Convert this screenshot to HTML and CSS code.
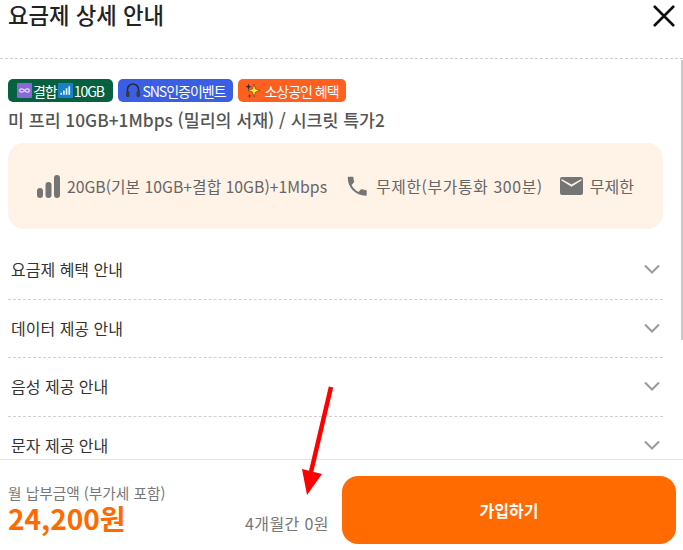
FILE: index.html
```html
<!DOCTYPE html>
<html lang="ko">
<head>
<meta charset="utf-8">
<title>요금제 상세 안내</title>
<link rel="stylesheet" href="styles.css">
</head>
<body>
<div class="modal">
  <header class="head">
    <h1 class="title">요금제 상세 안내</h1>
    <svg class="close" width="24" height="24" viewBox="0 0 24 24"><path d="M2 2L22 22M22 2L2 22" stroke="#111" stroke-width="2.6" fill="none"/></svg>
  </header>
  <main class="content">
    <div class="badges">
      <span class="badge green">
        <svg class="emo" width="15" height="15" viewBox="0 0 14 14"><rect width="14" height="14" rx="1" fill="#8a68d6"/><path d="M7 7C5.500 4.800 2.500 5 2.500 7S5.500 9.200 7 7 11.500 5 11.500 7 8.500 9.200 7 7Z" stroke="#e8e0fa" stroke-width="1.100" fill="none"/></svg>결합<svg class="emo" width="15" height="15" viewBox="0 0 14 14"><rect width="14" height="14" rx="1" fill="#1d7fc9"/><path d="M3 11V9M5.500 11V7M8 11V5M10.500 11V3" stroke="#dff" stroke-width="1.500"/></svg>10GB
      </span>
      <span class="badge blue">
        <svg class="emo" width="16" height="17" viewBox="0 0 16 17"><path d="M2.500 10V7.500a5.500 5.500 0 0 1 11 0V10" stroke="#2b2b33" stroke-width="1.600" fill="none"/><rect x="1" y="9" width="3.500" height="6" rx="1.500" fill="#3a3a42"/><rect x="11.500" y="9" width="3.500" height="6" rx="1.500" fill="#3a3a42"/></svg>SNS인증이벤트
      </span>
      <span class="badge orange">
        <svg class="emo" width="16" height="17" viewBox="0 0 16 17"><path d="M9 2L10.500 7 15 8.500 10.500 10 9 15 7.500 10 3 8.500 7.500 7Z" fill="#ffe838" stroke="#5a3a20" stroke-width=".6"/><path d="M3.500 1.500L4.300 4 6.500 4.700 4.300 5.500 3.500 8 2.700 5.500.5 4.700 2.700 4Z" fill="#2d2a4a"/><path d="M4.500 11.500L5 13.500 6.800 14 5 14.600 4.500 16.500 4 14.600 2.200 14 4 13.500Z" fill="#4a3a6a"/></svg>소상공인 혜택
      </span>
    </div>
    <h2 class="plan">미 프리 10GB+1Mbps (밀리의 서재) / 시크릿 특가2</h2>
    <section class="specs">
      <div class="spec">
        <svg width="23" height="23" viewBox="0 0 23 23"><rect x="0" y="13" width="6" height="10" rx="3" fill="#757575"/><rect x="8.500" y="7" width="6" height="16" rx="3" fill="#757575"/><rect x="17" y="0" width="6" height="23" rx="3" fill="#757575"/></svg>
        <span>20GB(기본 10GB+결합 10GB)+1Mbps</span>
      </div>
      <div class="spec">
        <svg width="23" height="23" viewBox="0 0 24 24"><path d="M6.620 10.790c1.440 2.830 3.760 5.140 6.590 6.590l2.200-2.200c.27-.27.67-.36 1.020-.24 1.120.37 2.330.57 3.570.57.550 0 1 .45 1 1V20c0 .55-.45 1-1 1C10.610 21 3 13.390 3 4c0-.55.450-1 1-1h3.500c.55 0 1 .45 1 1 0 1.250.2 2.450.57 3.570.11.350.03.740-.25 1.020l-2.200 2.200z" transform="translate(-1.500 -1.500) scale(1.100)" fill="#757575"/></svg>
        <span class="wide">무제한(부가통화 300분)</span>
      </div>
      <div class="spec mail">
        <svg width="23" height="18" viewBox="0 0 23 18"><path d="M2 0h19a2 2 0 0 1 2 2v14a2 2 0 0 1-2 2H2a2 2 0 0 1-2-2V2a2 2 0 0 1 2-2zM1.500 3.500l10 6.300 10-6.300V2l-10 5.500L1.500 2z" fill="#757575"/></svg>
        <span>무제한</span>
      </div>
    </section>
    <ul class="rows">
      <li class="row"><span>요금제 혜택 안내</span><svg class="chev" width="16" height="10" viewBox="0 0 16 10"><path d="M1 1.500L8 8.500 15 1.500" stroke="#9a9a9a" stroke-width="2" fill="none"/></svg></li>
      <li class="row"><span>데이터 제공 안내</span><svg class="chev" width="16" height="10" viewBox="0 0 16 10"><path d="M1 1.500L8 8.500 15 1.500" stroke="#9a9a9a" stroke-width="2" fill="none"/></svg></li>
      <li class="row"><span>음성 제공 안내</span><svg class="chev" width="16" height="10" viewBox="0 0 16 10"><path d="M1 1.500L8 8.500 15 1.500" stroke="#9a9a9a" stroke-width="2" fill="none"/></svg></li>
      <li class="row"><span>문자 제공 안내</span><svg class="chev" width="16" height="10" viewBox="0 0 16 10"><path d="M1 1.500L8 8.500 15 1.500" stroke="#9a9a9a" stroke-width="2" fill="none"/></svg></li>
    </ul>
  </main>
  <footer class="foot">
    <div class="price">
      <div class="price-label">월 납부금액 (부가세 포함)</div>
      <div class="price-value">24,200원</div>
    </div>
    <div class="promo">4개월간 0원</div>
    <button class="join">가입하기</button>
  </footer>
  <div class="thumb"></div>
  <svg class="arrow" width="683" height="550" viewBox="0 0 683 550"><path d="M331 387L311 472" stroke="#f00" stroke-width="4.500" fill="none"/><path d="M302 469L322 474 307 495Z" fill="#f00"/></svg>
</div>
</body>
</html>
```
FILE: styles.css
```css
* { box-sizing: border-box; }
html, body { margin: 0; padding: 0; height: 550px; overflow: hidden; background: #fff; }
body { font-family: "Noto Sans CJK KR", "Noto Sans", sans-serif; color: #222; }
.modal { position: relative; width: 683px; height: 550px; display: flex; flex-direction: column; overflow: hidden; }
.head { height: 59px; flex: none; display: flex; justify-content: space-between; align-items: flex-start; padding: 0 7px 0 8px; border-bottom: 1px dashed #d0d0d0; }
.title { margin: 0; font-size: 22.300px; line-height: 29px; font-weight: 500; color: #222; }
.close { margin-top: 4px; }
.content { flex: 1; min-height: 0; overflow: hidden; padding: 20px 20px 0 8px; }
.badges { display: flex; gap: 5px; height: 23px; }
.badge { display: flex; align-items: center; justify-content: center; gap: 1px; height: 23px; border-radius: 5px; color: #fff; font-size: 14px; letter-spacing: -1px; font-weight: 400; }
.green { width: 105px; background: #05613f; }
.blue { width: 115px; background: #3a5fe5; }
.orange { width: 108px; background: #ff5f1f; gap: 3px; }
.emo { flex: none; }
.plan { margin: 6px 0 0; font-size: 17.300px; line-height: 24px; font-weight: 500; color: #555; white-space: nowrap; }
.specs { margin-top: 11px; width: 655px; height: 86px; background: #fff2e6; border-radius: 16px; display: flex; align-items: center; justify-content: flex-end; padding: 0 29px 0 0; gap: 19px; }
.spec { display: flex; align-items: center; gap: 7px; font-size: 15.800px; color: #666; white-space: nowrap; }
.wide { letter-spacing: .65px; }
.mail { margin-left: -2px; font-size: 16px; }
.rows { list-style: none; margin: 12px 0 0; padding: 0; width: 655px; }
.row { height: 58.500px; display: flex; justify-content: space-between; align-items: center; padding: 0 3px 1px 3px; font-size: 16px; color: #333; border-bottom: 1px dashed #d0d0d0; }
.row:last-child { border-bottom: none; }
.foot { flex: none; height: 91px; background: #fff; border-top: 1px solid #e4e4e4; display: flex; align-items: flex-start; padding: 16px 7px 0 8px; position: relative; }
.price { width: 237px; padding-top: 7px; }
.price-label { font-size: 14.700px; line-height: 20px; color: #777; }
.price-value { font-size: 28px; line-height: 30px; font-weight: 700; color: #ff6a00; }
.promo { width: 97px; padding-top: 35px; text-align: left; font-size: 16px; line-height: 24px; letter-spacing: .4px; color: #777; white-space: nowrap; }
.join { width: 334px; height: 68px; border: 0; border-radius: 16px; background: #ff6b00; color: #fff; font: 700 16px "Noto Sans CJK KR", sans-serif; }
.thumb { position: absolute; right: 0; top: 60px; width: 2px; height: 280px; background: #c8c8c8; }
.arrow { position: absolute; left: 0; top: 0; pointer-events: none; }
```
